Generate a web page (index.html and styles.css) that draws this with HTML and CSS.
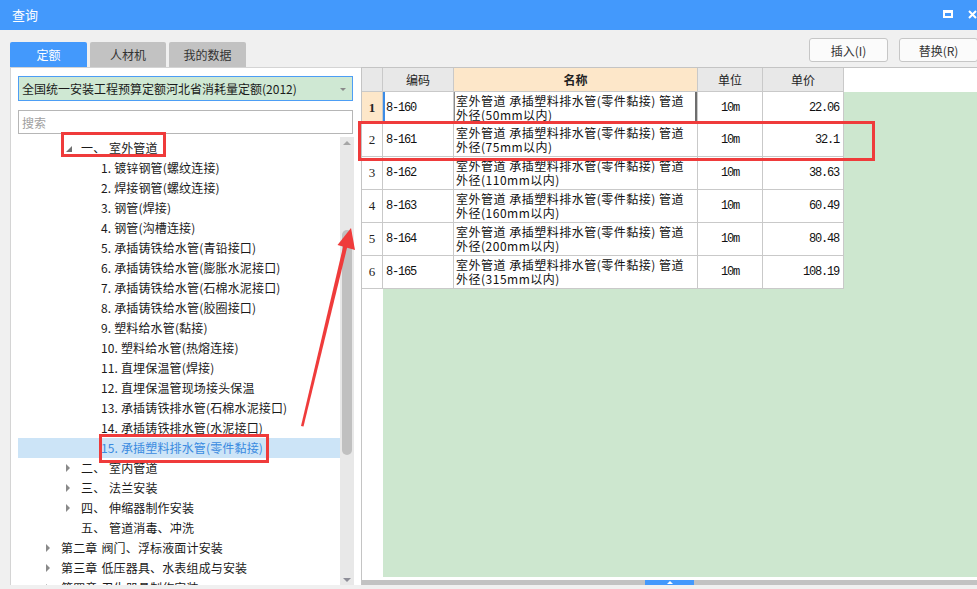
FILE: index.html
```html
<!DOCTYPE html>
<html lang="zh-CN">
<head>
<meta charset="utf-8">
<title>查询</title>
<link rel="stylesheet" href="styles.css">
</head>
<body>
<div class="titlebar">
  <div class="title">查询</div>
  <div class="win-max"></div>
  <svg class="win-close" width="9" height="9" viewBox="0 0 9 9"><path d="M1 1L8 8M8 1L1 8" stroke="#fff" stroke-width="2"/></svg>
</div>
<div class="main">
  <div class="left">
    <div class="tabs">
      <div class="tab active">定额</div>
      <div class="tab">人材机</div>
      <div class="tab wide">我的数据</div>
    </div>
    <div class="panel">
      <div class="select">全国统一安装工程预算定额河北省消耗量定额(2012)<span class="sel-arrow"></span></div>
      <div class="search">搜索</div>
      <div class="treewrap">
        <div class="tree">
          <div class="row l2"><span class="tw open"></span><span class="ord">一、</span>室外管道</div>
          <div class="row l3">1. 镀锌钢管(螺纹连接)</div>
          <div class="row l3">2. 焊接钢管(螺纹连接)</div>
          <div class="row l3">3. 钢管(焊接)</div>
          <div class="row l3">4. 钢管(沟槽连接)</div>
          <div class="row l3">5. 承插铸铁给水管(青铅接口)</div>
          <div class="row l3">6. 承插铸铁给水管(膨胀水泥接口)</div>
          <div class="row l3">7. 承插铸铁给水管(石棉水泥接口)</div>
          <div class="row l3">8. 承插铸铁给水管(胶圈接口)</div>
          <div class="row l3">9. 塑料给水管(黏接)</div>
          <div class="row l3">10. 塑料给水管(热熔连接)</div>
          <div class="row l3">11. 直埋保温管(焊接)</div>
          <div class="row l3">12. 直埋保温管现场接头保温</div>
          <div class="row l3">13. 承插铸铁排水管(石棉水泥接口)</div>
          <div class="row l3">14. 承插铸铁排水管(水泥接口)</div>
          <div class="row l3 selected">15. 承插塑料排水管(零件黏接)</div>
          <div class="row l2"><span class="tw closed"></span><span class="ord">二、</span>室内管道</div>
          <div class="row l2"><span class="tw closed"></span><span class="ord">三、</span>法兰安装</div>
          <div class="row l2"><span class="tw closed"></span><span class="ord">四、</span>伸缩器制作安装</div>
          <div class="row l2"><span class="tw"></span><span class="ord">五、</span>管道消毒、冲洗</div>
          <div class="row l1"><span class="tw closed"></span><span class="ch">第二章</span>阀门、浮标液面计安装</div>
          <div class="row l1"><span class="tw closed"></span><span class="ch">第三章</span>低压器具、水表组成与安装</div>
          <div class="row l1"><span class="tw closed"></span><span class="ch">第四章</span>卫生器具制作安装</div>
        </div>
        <div class="vscroll">
          <span class="arr-up"></span>
          <div class="thumb"></div>
          <div class="spacer"></div>
          <span class="arr-down"></span>
        </div>
      </div>
    </div>
  </div>
  <div class="right">
    <div class="toolbar">
      <div class="btn">插入(I)</div>
      <div class="btn">替换(R)</div>
    </div>
    <div class="grid">
      <div class="thead">
        <div class="cell c-rn"></div>
        <div class="cell c-code">编码</div>
        <div class="cell c-name hl">名称</div>
        <div class="cell c-unit">单位</div>
        <div class="cell c-price">单价</div>
      </div>
      <div class="tbody">
        <div class="rn-col">
          <div class="cell rn first cur">1</div>
          <div class="cell rn">2</div>
          <div class="cell rn">3</div>
          <div class="cell rn">4</div>
          <div class="cell rn">5</div>
          <div class="cell rn">6</div>
        </div>
        <div class="data-col">
          <div class="drow first">
            <div class="cell c-code code curcell">8-160</div>
            <div class="cell c-name name focus"><span>室外管道 承插塑料排水管(零件黏接) 管道</span><span>外径(50mm以内)</span></div>
            <div class="cell c-unit unit">10m</div>
            <div class="cell c-price price">22.06</div>
          </div>
          <div class="drow">
            <div class="cell c-code code">8-161</div>
            <div class="cell c-name name"><span>室外管道 承插塑料排水管(零件黏接) 管道</span><span>外径(75mm以内)</span></div>
            <div class="cell c-unit unit">10m</div>
            <div class="cell c-price price">32.1</div>
          </div>
          <div class="drow">
            <div class="cell c-code code">8-162</div>
            <div class="cell c-name name"><span>室外管道 承插塑料排水管(零件黏接) 管道</span><span>外径(110mm以内)</span></div>
            <div class="cell c-unit unit">10m</div>
            <div class="cell c-price price">38.63</div>
          </div>
          <div class="drow">
            <div class="cell c-code code">8-163</div>
            <div class="cell c-name name"><span>室外管道 承插塑料排水管(零件黏接) 管道</span><span>外径(160mm以内)</span></div>
            <div class="cell c-unit unit">10m</div>
            <div class="cell c-price price">60.49</div>
          </div>
          <div class="drow">
            <div class="cell c-code code">8-164</div>
            <div class="cell c-name name"><span>室外管道 承插塑料排水管(零件黏接) 管道</span><span>外径(200mm以内)</span></div>
            <div class="cell c-unit unit">10m</div>
            <div class="cell c-price price">80.48</div>
          </div>
          <div class="drow">
            <div class="cell c-code code">8-165</div>
            <div class="cell c-name name"><span>室外管道 承插塑料排水管(零件黏接) 管道</span><span>外径(315mm以内)</span></div>
            <div class="cell c-unit unit">10m</div>
            <div class="cell c-price price">108.19</div>
          </div>
        </div>
      </div>
      <div class="hscroll"><div class="hthumb"><span class="harr"></span></div></div>
    </div>
  </div>
</div>
<svg class="annot" width="977" height="589" viewBox="0 0 977 589">
  <g fill="none" stroke="#ef3b3b" stroke-width="3">
    <rect x="62.5" y="133.5" width="102" height="22"/>
    <rect x="100.5" y="435.5" width="167" height="26"/>
    <rect x="359.5" y="122.5" width="514" height="37"/>
  </g>
  <polygon fill="#ef3b3b" points="301,426 303.5,426.5 347.5,246 343.5,245"/>
  <polygon fill="#ef3b3b" points="351,228 355,250 337.5,245"/>
</svg>
</body>
</html>
```
FILE: styles.css
```css
* { box-sizing: border-box; margin: 0; padding: 0; }
html, body { width: 977px; height: 589px; overflow: hidden; }
body {
  background: #f0f0f0;
  font-family: "Noto Sans CJK SC", "Noto Sans", sans-serif;
  font-size: 12px;
  color: #1a1a1a;
  position: relative;
}

/* title bar */
.titlebar {
  height: 30px;
  background: #4399fc;
  color: #fff;
  display: flex;
  align-items: center;
  padding-left: 12px;
  font-size: 13px;
}
.titlebar .title { flex: 1; line-height: 30px; }
.win-max {
  width: 10px;
  height: 8px;
  border: 2px solid #fff;
  border-top-width: 3px;
  margin-right: 15px;
  margin-top: -2px;
}
.win-close { flex: none; margin-top: -2px; }

/* main layout */
.main { display: flex; height: 559px; }
.left {
  width: 361px;
  flex: none;
  padding: 12px 0 4px 10px;
  display: flex;
  flex-direction: column;
}
.tabs { display: flex; height: 25px; gap: 3px; }
.tab {
  width: 76px;
  background: #c2c2c2;
  color: #333;
  display: flex;
  align-items: center;
  justify-content: center;
  border-radius: 2px 2px 0 0;
}
.tab.active { width: 77px; background: #4399fc; color: #fff; }
.tab.wide { width: 77px; }

.panel {
  flex: 1;
  min-height: 0;
  background: #fff;
  border-left: 1px solid #d4d4d4;
  border-top: 1px solid #d4d4d4;
  padding: 8px 7px 0 7px;
  display: flex;
  flex-direction: column;
}
.select {
  height: 25px;
  margin-right: 1px;
  border: 1px solid #4d9ef5;
  background: #cfe8d3;
  display: flex;
  align-items: center;
  padding-left: 3px;
  color: #1a1a1a;
  position: relative;
}
.sel-arrow {
  position: absolute;
  right: 6px;
  top: 11px;
  border-top: 3px solid #8a8a8a;
  border-left: 3px solid transparent;
  border-right: 3px solid transparent;
}
.search {
  margin-top: 9px;
  margin-right: 1px;
  height: 24px;
  border: 1px solid #b6b6b6;
  color: #a0a0a0;
  display: flex;
  align-items: center;
  padding-left: 3px;
}
.treewrap {
  margin-top: 3px;
  flex: 1;
  min-height: 0;
  display: flex;
}
.tree { flex: 1; overflow: hidden; padding-top: 1px; }
.row {
  height: 20px;
  line-height: 20px;
  display: flex;
  align-items: center;
  white-space: nowrap;
  letter-spacing: 0.15px;
}
.row.l1 { padding-left: 28px; }
.row.l2 { padding-left: 48px; }
.row.l3 { padding-left: 83px; }
.row.selected { background: #cce4f7; color: #3a8ae0; }
.tw { width: 15px; flex: none; height: 20px; position: relative; }
.tw.closed::before {
  content: "";
  position: absolute;
  left: 0;
  top: 6px;
  border-left: 4px solid #8a8a8a;
  border-top: 4px solid transparent;
  border-bottom: 4px solid transparent;
}
.tw.open::before {
  content: "";
  position: absolute;
  left: 0;
  top: 8px;
  border-bottom: 6px solid #707070;
  border-left: 6px solid transparent;
}
.ord { width: 28px; flex: none; }
.ch { margin-right: 4px; }

.vscroll {
  width: 14px;
  flex: none;
  background: #e8e8e8;
  display: flex;
  flex-direction: column;
  align-items: center;
}
.arr-up {
  margin-top: 4px;
  border-bottom: 4px solid #a6a6a6;
  border-left: 4px solid transparent;
  border-right: 4px solid transparent;
}
.thumb {
  margin-top: 85px;
  width: 10px;
  height: 225px;
  border-radius: 5px;
  background: #c0c0c0;
}
.spacer { flex: 1; }
.arr-down {
  margin-bottom: 3px;
  border-top: 4px solid #8e8e98;
  border-left: 4px solid transparent;
  border-right: 4px solid transparent;
}

/* right */
.right {
  flex: 1;
  min-width: 0;
  display: flex;
  flex-direction: column;
  padding-bottom: 4px;
}
.toolbar {
  height: 37px;
  padding: 8px 0 0 448px;
  display: flex;
  gap: 11px;
}
.btn {
  flex: none;
  width: 79px;
  height: 24px;
  border: 1px solid #c6c6c6;
  border-radius: 3px;
  background: #fbfbfb;
  display: flex;
  align-items: center;
  justify-content: center;
  color: #333;
}
.grid {
  flex: 1;
  min-height: 0;
  background: #fff;
  border-left: 1px solid #c4c4c4;
  border-top: 1px solid #c4c4c4;
  display: flex;
  flex-direction: column;
}
.thead { display: flex; height: 24px; flex: none; }
.cell {
  flex: none;
  border-right: 1px solid #c9c9c9;
  border-bottom: 1px solid #c9c9c9;
  display: flex;
  align-items: center;
}
.thead .cell { background: #e8e8e8; justify-content: center; color: #222; }
.thead .cell.hl { background: #fde7c9; font-weight: bold; }
.c-rn { width: 21px; }
.c-code { width: 71px; }
.c-name { width: 244px; }
.c-unit { width: 65px; }
.c-price { width: 81px; }

.tbody { flex: 1; min-height: 0; display: flex; }
.rn-col { width: 21px; flex: none; display: flex; flex-direction: column; }
.rn {
  height: 33px;
  width: 21px;
  justify-content: center;
  font-family: "Liberation Serif", serif;
  font-size: 13px;
  color: #222;
}
.rn.first { height: 32px; }
.rn.cur { background: #fde7c9; font-weight: bold; }
.data-col { flex: 1; background: #cde7cf; display: flex; flex-direction: column; align-items: flex-start; }
.drow { display: flex; height: 33px; background: #fff; }
.drow.first { height: 32px; }
.drow .cell { height: 100%; }
.code, .unit, .price {
  font-family: "Liberation Mono", monospace;
  font-size: 12px;
  letter-spacing: -1.2px;
  color: #111;
}
.code { padding-left: 3px; }
.code.curcell { box-shadow: inset 2px 0 0 #3c8ce6; }
.unit { justify-content: center; }
.price { justify-content: flex-end; padding-right: 4px; }
.name {
  flex-direction: column;
  align-items: flex-start;
  justify-content: center;
  padding-left: 2px;
  color: #111;
  white-space: nowrap;
  overflow: hidden;
  letter-spacing: 0.5px;
}
.name span { display: block; height: 14px; line-height: 14px; }
.name.focus { box-shadow: inset -2px -2px 0 #6e6e6e, inset 1px 0 0 #8c8c8c; }

.hscroll {
  margin-top: 3px;
  height: 5px;
  flex: none;
  background: #c2c2c2;
  padding-left: 283px;
}
.hthumb {
  width: 49px;
  height: 5px;
  background: #4399fc;
  display: flex;
  justify-content: center;
  align-items: flex-end;
}
.harr {
  border-bottom: 3px solid #fff;
  border-left: 3px solid transparent;
  border-right: 3px solid transparent;
  margin-bottom: 1px;
}

.annot { position: absolute; left: 0; top: 0; pointer-events: none; }
```
